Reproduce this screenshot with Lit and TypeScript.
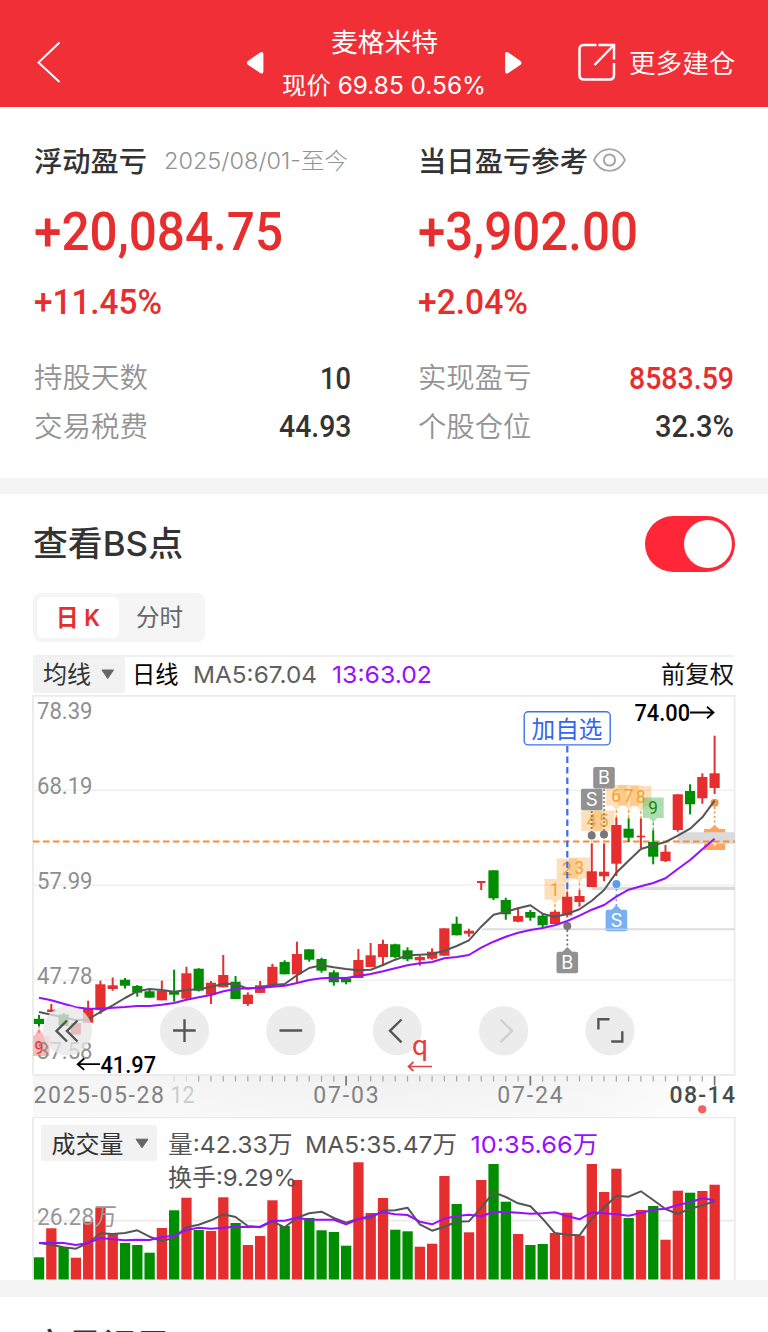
import { LitElement, html, svg, css } from "lit";
import { customElement, property } from "lit/decorators.js";

const STEP = 12.284;
const FIRST = 39;
const cx = (i: number) => FIRST + STEP * i;

// direction, body top, body bottom, high, low
type Candle = [string, number, number, number, number];
const candles: Candle[] = [
  ["g", 1018.8, 1024, 1015, 1026], ["r", 1009.5, 1012, 1004, 1012], ["g", 1014.5, 1026, 1013, 1026],
  ["r", 1023, 1034.5, 1023, 1034.5], ["r", 1008.7, 1022.7, 1000.7, 1022.7], ["r", 984.3, 1010, 980.7, 1014],
  ["r", 985.3, 989, 977.5, 990.7], ["g", 979.7, 985.7, 978, 988.5], ["g", 986, 992.7, 985, 996.7],
  ["g", 991.3, 997.7, 988, 997.7], ["r", 990.7, 1000.3, 980.7, 1000.3], ["g", 991.7, 994.7, 969.7, 1001.7],
  ["r", 973.3, 998.7, 966.7, 998.7], ["g", 968.7, 990.7, 968.2, 991.5], ["r", 982.7, 994.7, 981, 1004],
  ["r", 975, 987.3, 955, 987.3], ["g", 981.7, 999, 976, 999], ["r", 994.7, 1004, 992.3, 1006],
  ["r", 985.3, 992.9, 981, 992.9], ["r", 966.8, 985.7, 963.8, 985.7], ["g", 962, 974.3, 960.3, 974.3],
  ["r", 954, 974.3, 941.7, 983.3], ["g", 949.3, 959.7, 949.3, 961.7], ["g", 959, 970.7, 957.7, 972.7],
  ["g", 972.3, 982.3, 970.3, 985.7], ["g", 978.3, 982.3, 977.7, 984.3], ["r", 960, 978, 949, 978],
  ["r", 955.3, 967, 943, 967], ["r", 944, 957, 939.7, 966], ["g", 944.3, 957, 943.7, 958.3],
  ["g", 950.3, 959.3, 947.3, 961.3], ["r", 957, 960.3, 955.3, 965.7], ["r", 951.7, 958.7, 948.3, 959.7],
  ["r", 928.3, 955.7, 928.3, 955.7], ["g", 923.7, 935.3, 916.7, 935.3], ["r", 930.7, 933.7, 928.7, 936.7],
  ["t", 881, 883, 881, 890], ["g", 870.3, 898.3, 870.3, 900], ["g", 900, 914.3, 897.7, 919.7],
  ["r", 916, 921.7, 907.5, 922.3], ["g", 912, 917.7, 910, 920.7], ["g", 915.7, 925.3, 914.3, 928],
  ["r", 911.7, 924, 910.3, 924], ["r", 896.7, 915.3, 891.7, 917.3], ["r", 896, 902, 890, 906.7],
  ["r", 871.3, 887, 843.3, 887], ["r", 871.7, 876.3, 843.3, 881.3], ["r", 825, 863.7, 817.3, 876],
  ["g", 828.7, 837.7, 818.3, 842], ["t", 835.7, 837.3, 818.3, 848.3], ["g", 842, 856.7, 830.3, 864.3],
  ["r", 851.7, 861, 845, 862], ["r", 794.3, 830, 794.3, 831.7], ["g", 791, 804.3, 784.3, 814.3],
  ["r", 777, 798.3, 773.3, 803.7], ["r", 773.3, 788, 735.7, 794],
];

const ma5 = [1012, 1014.7, 1017.3, 1020.3, 1019.3, 1012, 1005.3, 998, 991.3, 989, 990, 991.7, 990, 989.3, 987, 983.7, 984, 988.7, 987.3, 985, 984, 975.3, 968, 965.3, 967.3, 969, 970.3, 969.7, 965, 959.7, 955.3, 954.7, 954, 950.7, 946, 940.3, 926.7, 914.7, 911.7, 908.3, 905.3, 913.7, 917, 913.7, 909.3, 900.7, 890, 872.7, 860.7, 849, 845.3, 842, 835.7, 828.7, 817.3, 800.7];
const ma13 = [997.7, 1000.3, 1003.7, 1007.3, 1008.7, 1008.7, 1007.7, 1007, 1006, 1006, 1004.7, 1003, 999.7, 997.3, 995, 991.3, 989, 988.3, 988, 986.7, 985.7, 983, 980, 978.3, 977.7, 978, 976, 974, 971.3, 968.3, 965.3, 963.3, 962, 958.3, 957, 955, 947.7, 941.7, 936.7, 932.7, 930, 928, 925.3, 921, 915.7, 909.7, 905, 896.7, 889.7, 886.3, 883, 878.3, 869, 860, 849.3, 838.7];

const volDir = "grgrrrrgggrgrgrrgrrrgrggggrrrggrrrgrrggrggrrrrrrgrgrrgrr";
const volTop = [1257.3, 1228.3, 1247, 1257.7, 1221.7, 1207.7, 1233, 1243, 1245, 1252.7, 1228, 1210.3, 1197.7, 1230, 1231, 1197.3, 1223, 1245, 1236, 1200.3, 1226, 1180, 1218, 1230.3, 1232, 1245.7, 1162.3, 1213, 1198, 1229.7, 1231.3, 1246.7, 1243.7, 1176, 1204, 1232.3, 1180, 1164, 1201.7, 1234, 1245, 1244, 1233, 1212.7, 1235.7, 1164, 1192, 1168.7, 1218, 1210, 1206, 1239.7, 1190.7, 1192.7, 1191, 1184.7];
const volMa5 = [1243, 1244.7, 1247.3, 1248.7, 1243, 1233.3, 1234, 1233, 1230.3, 1236.7, 1241, 1237.7, 1227.3, 1224.7, 1220.3, 1214.3, 1217, 1226, 1227.3, 1221.3, 1227.3, 1217.7, 1213.3, 1211.7, 1218, 1222.7, 1218.7, 1218, 1210.7, 1210.3, 1207.7, 1224.3, 1230.7, 1226.7, 1221.7, 1221.3, 1207.7, 1192.3, 1197, 1203.3, 1206.3, 1218.7, 1233, 1234.7, 1235.3, 1218.7, 1207.7, 1195.7, 1196.7, 1191.3, 1200, 1209, 1214, 1208.7, 1205.3, 1201.3];
const volMa10 = [1243, 1242.7, 1243, 1245, 1243, 1238, 1239.3, 1240.3, 1239.7, 1240, 1237, 1235.7, 1230, 1227.7, 1228.7, 1227.7, 1226.7, 1227, 1226.7, 1220.7, 1220.7, 1217.7, 1219.7, 1219.7, 1219.7, 1224.3, 1219, 1216, 1212.3, 1214.3, 1215, 1221.7, 1224.3, 1218.7, 1216, 1214.7, 1216.3, 1212, 1212, 1212.7, 1213.7, 1213.3, 1212.3, 1216, 1219.3, 1212.3, 1213.3, 1214.3, 1215.7, 1213, 1209.7, 1208.7, 1205, 1202.3, 1198.3, 1200.3];

const polyline = (ys: number[]) => ys.map((y, i) => `${cx(i).toFixed(1)},${y}`).join(" ");

// Chart text: left edge, baseline, size and advance width
const label = (cls: string, x: number, y: number, size: number, w: number, s: string, adjust = "spacingAndGlyphs") =>
  svg`<text class=${cls} x=${x} y=${y} font-size=${size} textLength=${w} lengthAdjust=${adjust}>${s}</text>`;

// One line of text set to a fixed advance width, box height = height above the baseline
@customElement("fit-text")
class FitText extends LitElement {
  @property() text = "";
  @property({ type: Number }) w = 100;
  @property({ type: Number }) h = 20;
  @property({ type: Number }) size = 24;
  static styles = css`
    :host { display: block; flex: none; }
    svg { display: block; overflow: visible; }
    text { fill: currentColor; white-space: pre; }
  `;
  render() {
    return html`<svg width=${this.w} height=${this.h}><text x="0" y=${this.h} font-size=${this.size}
      textLength=${this.w} lengthAdjust="spacingAndGlyphs">${this.text}</text></svg>`;
  }
}

const fit = (cls: string, text: string, w: number, h: number, size: number) =>
  html`<fit-text class=${cls} .text=${text} .w=${w} .h=${h} .size=${size}></fit-text>`;

@customElement("price-chart")
class PriceChart extends LitElement {
  static styles = css`
    :host { display: block; }
    svg { display: block; }
    text { font-family: Roboto, "Noto Sans CJK SC", sans-serif; white-space: pre; }
    .grid { stroke: #f0f0f0; stroke-width: 1.6; }
    .frame { stroke: #ebebeb; stroke-width: 1.8; fill: none; }
    .r { fill: #e62e2e; stroke: none; } .g { fill: #008d00; stroke: none; }
    .wr { stroke: #e62e2e; stroke-width: 2; } .wg { stroke: #008d00; stroke-width: 2; }
    .ma { fill: none; stroke: #565656; stroke-width: 2; stroke-linejoin: round; }
    .mb { fill: none; stroke: #980fff; stroke-width: 2; stroke-linejoin: round; }
    .axis { fill: #8f8f8f; } .date { fill: #828282; } .faint { fill: #cccccc; } .now { fill: #4a4a4a; font-weight: 500; }
    .peak { fill: #000; font-weight: 500; }
    .arrow { stroke: #000; stroke-width: 1.8; fill: none; }
    .ret { fill: none; stroke: #e84040; stroke-width: 1.7; }
    .pick { fill: #3565f0; font-family: "Noto Sans CJK SC", sans-serif; }
    .tag { fill: #fff; font-family: Inter, sans-serif; }
    .cnt { fill: #fba01f; } .cntg { fill: #108a10; } .cntr { fill: #e62e2e; } .q { fill: #ea3c3c; }
    .btn { fill: #e6e6e6; fill-opacity: .77; }
    .ico { fill: none; stroke: #555; stroke-width: 2.4; }
    .off { stroke: #d0d0d0; }
    .tick { stroke: #a5a5a5; stroke-width: 1.2; } .major { stroke: #777; stroke-width: 1.7; }
  `;
  private counter(n: string, i: number, y: number, tail: number) {
    const x = cx(i);
    const green = n === "9";
    const c = green ? "#43ad43" : "#f9a02a";
    return svg`
      <path d="M${x - 10.5} ${y}h21v20.500h-6.500l-4 4.500-4-4.500h-6.500z" fill=${c} fill-opacity=${green ? 0.42 : 0.32}/>
      <line x1=${x} x2=${x} y1=${y + 25} y2=${tail} stroke=${c} stroke-width="1.3" stroke-dasharray="3 2"/>
      ${label(green ? "cntg" : "cnt", x - 5, y + 16.5, 18, 9.600, n)}`;
  }
  private badge(s: string, x: number, y: number, fill: string) {
    return svg`<rect x=${x - 10.8} y=${y} width="21.6" height="21.600" rx="2" fill=${fill}/>
      ${label("tag", x - 6, y + 17.2, 18.5, 12, s)}`;
  }
  render() {
    return html`<svg width="704" height="422" viewBox="32 695 704 422">
      <defs>
        <linearGradient id="strip" x1="0" x2="1" y1="0" y2="0">
          <stop offset="0" stop-color="#f5f5f5"/><stop offset=".2" stop-color="#f4f4f4"/><stop offset=".5" stop-color="#f0f0f0"/>
          <stop offset=".8" stop-color="#f5f5f5"/><stop offset="1" stop-color="#ffffff"/>
        </linearGradient>
        <linearGradient id="glow" x1="0" x2="0" y1="0" y2="1">
          <stop offset="0" stop-color="#fff" stop-opacity="0"/><stop offset="1" stop-color="#fff" stop-opacity=".4"/>
        </linearGradient>
      </defs>
      <path class="frame" d="M33 1075V695.800H734.600V1075"/>
      <path class="grid" d="M33 790.200H734M33 885.300H734M33 980.300H734"/>
      ${label("axis", 37, 719, 23, 55.500, "78.39")}
      ${label("axis", 37, 793.500, 23, 55.500, "68.19")}
      ${label("axis", 37, 888.700, 23, 55.500, "57.99")}
      ${label("axis", 37, 983.500, 23, 55.500, "47.78")}
      <path d="M482 929.300H735" stroke="#dcdcdc" stroke-width="2"/>
      <path d="M592 888.300H735" stroke="#dadada" stroke-width="3.200"/>
      <path d="M33 841.500H735" stroke="#ff8b2e" stroke-width="2" stroke-dasharray="6.500 3.500"/>
      <path d="M33 1036h1l5-8 5 8h5.500v20H33v-20z" fill="#f8bcbc"/>
      <path d="M39 1025v8" stroke="#ee6a6a" stroke-width="1.300" stroke-dasharray="3 2"/>
      ${this.counter("1", 42, 879, 911)}${this.counter("2", 43, 858.500, 892)}${this.counter("3", 44, 857.500, 891)}
      ${this.counter("4", 45, 810.500, 842)}${this.counter("5", 46, 810.500, 842)}
      ${this.counter("6", 47, 785, 817)}${this.counter("7", 48, 785, 818)}${this.counter("8", 49, 786, 818)}
      ${this.counter("9", 50, 797.500, 830)}
      <path d="M567.300 746V890" stroke="#3b6cf2" stroke-width="2.200" stroke-dasharray="6.500 4"/>
      ${candles.map(([d, t, b, hi, lo], i) => {
        const c = d === "g" ? "g" : "r";
        const half = d === "t" || b - t < 3 ? 4.2 : 5.1;
        return svg`<line class=${"w" + c} x1=${cx(i)} x2=${cx(i)} y1=${hi} y2=${lo}/>
          <rect class=${c} x=${cx(i) - half} y=${t} width=${half * 2} height=${b - t}/>`;
      })}
      <path d="M591.700 811V832" stroke="#777" stroke-width="1.800" stroke-dasharray="2 2"/>
      <path d="M604 789V831" stroke="#888" stroke-width="1.800" stroke-dasharray="2 2"/>
      <circle cx="591.700" cy="835.500" r="4" fill="#777"/><circle cx="604" cy="834.600" r="4" fill="#777"/>
      ${this.badge("S", 591.7, 788.7, "#929292")}${this.badge("B", 604, 767, "#929292")}
      <path d="M567.300 930V950" stroke="#777" stroke-width="1.800" stroke-dasharray="2 2.500"/>
      <circle cx="567.300" cy="926" r="4" fill="#777"/>
      <path d="M562.300 952l5-5 5 5z" fill="#929292"/>${this.badge("B", 567.3, 951.7, "#929292")}
      <path d="M616.400 889V909" stroke="#6aa6ee" stroke-width="1.600" stroke-dasharray="2 3"/>
      <circle cx="616.400" cy="884" r="4" fill="#5a9eea"/>
      <path d="M611.400 910l5-5 5 5z" fill="#7aaff2"/>${this.badge("S", 616.4, 909.7, "#7aaff2")}
      <path d="M605 929.300H628" stroke="#b4cdee" stroke-width="1.600"/>
      <circle cx="714.600" cy="802.700" r="4" fill="#fb9440"/>
      <path d="M714.600 807V826" stroke="#fb9440" stroke-width="1.600" stroke-dasharray="2 2.500"/>
      <path d="M704 829h6l4.600-4 4.600 4h6v21h-21.200z" fill="#ffa45c"/>
      <path d="M677.500 832.300H735v11.500H677.500z" fill="#dadada"/>
      <path d="M677.500 841.500H735" stroke="#ff8b2e" stroke-width="2" stroke-dasharray="6.500 3.500" stroke-dashoffset="4.500"/>
      <path d="M714.600 843v2.500" stroke="#fff" stroke-width="2"/>
      <polyline class="ma" points=${polyline(ma5)}/>
      <polyline class="mb" points=${polyline(ma13)}/>
      <rect x="524.200" y="711.700" width="86" height="33.200" rx="4" fill="#fff" stroke="#3f70f2" stroke-width="1.400"/>
      ${label("pick", 531.5, 737.500, 23.500, 71, "加自选")}
      ${label("peak", 634.500, 721, 24, 55.500, "74.00")}
      <path class="arrow" d="M690 712.500H713.500M707 706.800l6.500 5.700-6.500 5.700"/>
      ${label("cntr", 34.5, 1053.500, 18.500, 9, "9")}
      ${label("axis", 37, 1058.500, 23, 55.500, "37.58")}
      ${label("peak", 100.500, 1072.500, 23.500, 55.500, "41.97")}
      <path class="arrow" d="M100 1064.200H77.700M84.200 1058.500l-6.500 5.700 6.500 5.700"/>
      ${[67.5, 184.5, 290.8, 397.3, 503.6, 610].map((x) => svg`<circle class="btn" cx=${x} cy="1030.700" r="24.600"/>`)}
      ${label("q", 412, 1054.500, 27, 16, "q")}
      <path class="ret" d="M432 1066.500H408.500M413.500 1062l-5 4.500 5 4.500"/>
      <path class="ico" d="M67 1020.500L56.500 1031 67 1041.500M77.500 1020.500L67 1031l10.500 10.500M184.500 1019.200V1042M173 1030.500H195.700M279.500 1030.500H302.200M401.500 1019.500L390 1030.800l11.500 11.500M598.400 1029.500V1019.200H609.500M622.300 1031.200V1041.500H611.200"/>
      <path class="ico off" d="M500.500 1019.500L512 1030.800l-11.500 11.500"/>
      <rect x="33" y="1075" width="702.500" height="42" fill="url(#strip)"/>
      <rect x="33" y="1075" width="702.500" height="42" fill="url(#glow)"/>
      <path class="frame" d="M33 1075H735.500"/>
      ${Array.from({ length: 45 }, (_, k) => k + 11).map((i) => {
        const major = i === 25 || i === 40 || i === 55;
        return svg`<line class=${major ? "major" : "tick"} x1=${cx(i)} x2=${cx(i)} y1="1076"
          y2=${major ? 1085.5 : 1081.5} stroke-opacity=${i < 13 ? 0.4 : 1}/>`;
      })}
      ${label("date", 33.5, 1103.400, 23, 130.500, "2025-05-28", "spacing")}
      ${label("faint", 170.500, 1103.400, 23, 24, "12")}
      ${label("date", 313.300, 1103.400, 23, 65.500, "07-03", "spacing")}
      ${label("date", 497.300, 1103.400, 23, 65.500, "07-24", "spacing")}
      ${label("now", 669.500, 1103.400, 23, 65.500, "08-14", "spacing")}
      <circle cx="702.200" cy="1109.300" r="4.100" fill="#f56060"/>
    </svg>`;
  }
}

@customElement("volume-chart")
class VolumeChart extends LitElement {
  static styles = css`
    :host { display: block; }
    svg { display: block; }
    text { font-family: Inter, "Noto Sans CJK SC", sans-serif; white-space: pre; fill: #555; }
    .r { fill: #e62e2e; } .g { fill: #008d00; }
    .frame { fill: none; stroke: #ebebeb; stroke-width: 1.8; }
    .ma { fill: none; stroke: #565656; stroke-width: 2; stroke-linejoin: round; }
    .mb { fill: none; stroke: #980fff; stroke-width: 2; stroke-linejoin: round; }
    .sel { fill: #333; } .val { fill: #555; } .vio { fill: #980fff; }
    .axis { fill: #989898; font-family: Roboto, "Noto Sans CJK SC", sans-serif; }
  `;
  render() {
    return html`<svg width="704" height="163" viewBox="32 1117 704 163">
      <path class="frame" d="M33 1280V1117.400H734.800V1280M33 1220.700H734"/>
      ${volTop.map((t, i) => svg`<rect class=${volDir[i]} x=${cx(i) - 5.1} y=${t} width="10.300" height=${1279.5 - t}/>`)}
      <polyline class="ma" points=${polyline(volMa5)}/>
      <polyline class="mb" points=${polyline(volMa10)}/>
      <rect x="41" y="1125" width="116" height="36" rx="2.500" fill="#f2f2f2"/>
      ${label("sel", 51.5, 1153, 24, 72, "成交量")}
      <path d="M136 1139.200h12l-6 8.600z" fill="#666" stroke="#666" stroke-linejoin="round"/>
      ${label("val", 168, 1153, 23.500, 124.500, "量:42.33万")}
      ${label("val", 305, 1153, 23.500, 152, "MA5:35.47万")}
      ${label("vio", 470.500, 1153, 23.500, 127.500, "10:35.66万")}
      ${label("val", 168, 1185.700, 23.500, 129, "换手:9.29%")}
      ${label("axis", 37, 1224.500, 23.500, 80, "26.28万")}
    </svg>`;
  }
}

@customElement("app-root")
class AppRoot extends LitElement {
  static styles = css`
    :host {
      display: block; width: 768px; height: 1332px; overflow: hidden; background: #fff;
      font-family: Inter, "Noto Sans CJK SC", sans-serif; color: #333;
    }
    * { box-sizing: border-box; }
    svg { display: block; flex: none; }
    header { height: 107px; background: #f12f37; color: #fff; display: flex; padding-left: 36px; }
    .back { margin-top: 40.5px; }
    .tri-l { margin: 50.5px 0 0 184px; }
    .tri-r { margin: 50.5px 0 0 18px; }
    .title { width: 204px; margin-left: 17px; padding-top: 31px; display: flex; flex-direction: column; align-items: center; gap: 22px; }
    .share { margin: 41px 0 0 54px; }
    .more { margin: 50px 0 0 11.5px; font-weight: 350; }
    .cjk { font-family: "Noto Sans CJK SC", sans-serif; }
    .num { font-family: Roboto, sans-serif; font-weight: 500; }
    .red { color: #e62e2e; }
    .mid { font-weight: 500; }
    .light { font-weight: 300; color: #929292; }
    .summary { height: 371px; padding: 40.5px 34px 0 34px; display: grid; grid-template-columns: 317px 316px; column-gap: 67px; }
    .head { display: flex; align-items: flex-end; height: 24px; margin-left: -0.5px; }
    .date { margin: 0 0 3px 17.5px; }
    .eye { margin: 0 0 -1px 4.5px; }
    .big { margin-top: 40.5px; }
    .pct { margin-top: 37.5px; }
    .rows { margin-top: 51px; display: grid; row-gap: 24.5px; }
    .row { display: flex; justify-content: space-between; align-items: flex-end; height: 24px; }
    .name { margin-left: -0.5px; font-weight: 350; color: #949494; }
    .band { height: 16px; background: #f4f4f4; }
    .band.low { height: 17px; }
    .panel { padding: 22px 32px 0 33px; height: 786px; }
    .bar { display: flex; justify-content: space-between; align-items: flex-start; height: 77px; padding-right: 1px; }
    .heading { margin-top: 14px; }
    .switch { width: 90px; height: 56px; border-radius: 28px; background: #ff2638; display: flex; justify-content: flex-end; padding: 4px 3.5px; }
    .knob { width: 48px; height: 48px; border-radius: 50%; background: #fff; }
    .tabs { width: 172px; height: 49px; border-radius: 8px; background: #f5f5f5; padding: 4px; display: flex; }
    .tab { width: 82px; height: 41px; border-radius: 6px; display: flex; justify-content: center; padding-top: 8px; }
    .tab.on { background: #fff; font-weight: 600; }
    .tab.off { color: #666; padding-top: 9px; width: 80px; }
    .legend { margin-top: 12.5px; border-top: 2px solid #f0f0f0; height: 40.5px; width: 702px; display: flex; }
    .drop { width: 91.5px; height: 36px; background: #f2f2f2; border-radius: 2px; display: flex; padding: 7.5px 0 0 10px; }
    .drop svg { margin: 5px 0 0 9.5px; }
    .legend > fit-text { margin-top: 6px; height: 20px; }
    .k { margin-left: 7.5px; color: #000; }
    .m { margin-left: 14px; color: #606060; }
    .v { margin-left: 15.5px; color: #980fff; }
    .adj { margin-left: auto; margin-right: 1px; color: #111; }
    price-chart, volume-chart { width: 704px; margin-left: -1px; }
    .next { padding: 30px 0 0 33px; height: 35px; overflow: hidden; }
  `;
  private row(name: string, w: number, value: string, vw: number, cls = "") {
    return html`<div class="row">${fit("cjk name", name, w, 22, 28.3)}${fit("num " + cls, value, vw, 22.5, 31.5)}</div>`;
  }
  render() {
    return html`
      <header>
        <svg class="back" width="26" height="44" viewBox="36 41 26 44"><path d="M59.500 42.500L38.500 62.500 59.500 82" fill="none" stroke="#fff" stroke-width="2"/></svg>
        <svg class="tri-l" width="19" height="24" viewBox="246 51 19 24"><path d="M262.500 54v17.500q0 1.500-1.500 1L248.500 64q-1.200-1.200 0-2.400L261 53q1.500-.6 1.500 1z" fill="#fff" stroke="#fff" stroke-width="1.800"/></svg>
        <div class="title">
          ${fit("cjk", "麦格米特", 107, 21, 26.7)}
          ${fit("", "现价 69.85 0.56%", 204, 20, 24.3)}
        </div>
        <svg class="tri-r" width="19" height="24" viewBox="504 51 19 24"><path d="M506 54v17.500q0 1.500 1.500 1L520 64q1.200-1.200 0-2.400L507.500 53q-1.500-.6-1.500 1z" fill="#fff" stroke="#fff" stroke-width="1.800"/></svg>
        <svg class="share" width="40" height="42" viewBox="577 42 40 42"><path d="M596.500 46H584q-4.500 0-4.500 4.500V76q0 4.500 4.500 4.500H609.500q4.500 0 4.500-4.500V64M594.500 66L613 47M598.500 46H614V60.500" fill="none" stroke="#fff" stroke-width="2.500"/></svg>
        ${fit("cjk more", "更多建仓", 106.5, 22.5, 26.7)}
      </header>
      <section class="summary">
        <div>
          <div class="head">${fit("cjk mid", "浮动盈亏", 113, 24, 28.3)}${fit("light date", "2025/08/01-至今", 184, 20, 22.3)}</div>
          ${fit("num red big", "+20,084.75", 249, 38, 53.5)}
          ${fit("num red pct", "+11.45%", 128, 25.5, 35.5)}
          <div class="rows">${this.row("持股天数", 114, "10", 31)}${this.row("交易税费", 114, "44.93", 72.5)}</div>
        </div>
        <div>
          <div class="head">${fit("cjk mid", "当日盈亏参考", 170, 24, 28.3)}
            <svg class="eye" width="34" height="26" viewBox="592 147 34 26"><path d="M594 160C601 145.500 618 145.500 625 160 618 174.500 601 174.500 594 160z" fill="none" stroke="#a6a6a6" stroke-width="1.800"/><circle cx="609.500" cy="160" r="5.600" fill="none" stroke="#a6a6a6" stroke-width="2"/></svg>
          </div>
          ${fit("num red big", "+3,902.00", 220, 38, 53.5)}
          ${fit("num red pct", "+2.04%", 110, 25.5, 35.5)}
          <div class="rows">${this.row("实现盈亏", 113.5, "8583.59", 105, "red")}${this.row("个股仓位", 113.5, "32.3%", 79)}</div>
        </div>
      </section>
      <div class="band"></div>
      <section class="panel">
        <div class="bar">
          ${fit("mid heading", "查看BS点", 150, 26, 34)}
          <div class="switch"><div class="knob"></div></div>
        </div>
        <div class="tabs">
          <div class="tab on red">${fit("", "日 K", 44, 20.5, 23.5)}</div>
          <div class="tab off">${fit("cjk", "分时", 47, 20, 23.5)}</div>
        </div>
        <div class="legend">
          <div class="drop">${fit("cjk", "均线", 48, 19, 24)}
            <svg width="14" height="11" viewBox="0 0 14 11"><path d="M1 1h11.500L6.700 9.500z" fill="#666" stroke="#666" stroke-linejoin="round"/></svg></div>
          ${fit("cjk k", "日线", 46.5, 20, 23.5)}
          ${fit("m", "MA5:67.04", 124, 20, 23.5)}
          ${fit("v", "13:63.02", 100, 20, 23.5)}
          ${fit("cjk adj", "前复权", 73, 20, 24)}
        </div>
        <price-chart></price-chart>
        <volume-chart></volume-chart>
      </section>
      <div class="band low"></div>
      <div class="next">${fit("cjk mid", "交易记录", 138, 31.2, 34)}</div>
    `;
  }
}
